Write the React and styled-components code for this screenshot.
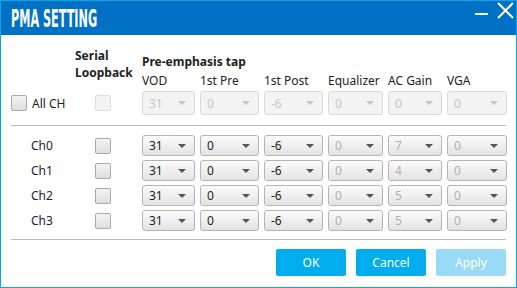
import React from "react";
import styled, { createGlobalStyle, css } from "styled-components";

const Global = createGlobalStyle`
  html, body { margin: 0; padding: 0; background: #ffffff; }
  body { font-family: "Noto Sans", "Open Sans", sans-serif; font-size: 12px; color: #222; }
`;

const COLS = [53, 59, 59, 55, 54, 60];
const gridCols = COLS.map((w) => `${w}px`).join(" ");

const Window = styled.div`
  width: 517px;
  height: 288px;
  box-sizing: border-box;
  border: 1px solid #13a3e3;
  display: flex;
  flex-direction: column;
  background: #fff;
  overflow: hidden;
`;

const TitleBar = styled.div`
  height: 34px;
  background: #0071c5;
  display: flex;
  align-items: center;
  padding-left: 10px;
  position: relative;
  flex-shrink: 0;
`;

const Title = styled.span`
  display: inline-block;
  color: #fff;
  font-family: "DejaVu Sans Condensed", "DejaVu Sans", sans-serif;
  font-weight: bold;
  font-size: 24px;
  line-height: 1;
  transform: scaleX(0.52);
  transform-origin: left center;
  white-space: nowrap;
  margin-top: 1px;
`;

const WinControls = styled.div`
  margin-left: auto;
  display: flex;
  align-items: flex-start;
  align-self: stretch;
  gap: 9px;
  padding-right: 2px;
`;

const Body = styled.div`
  padding: 0 10px 0 10px;
  display: flex;
  flex-direction: column;
`;

const Header = styled.div`
  display: flex;
  height: 54px;
`;

const LeftCol = styled.div`
  width: 64px;
  flex-shrink: 0;
  display: flex;
  align-items: center;
  gap: 5px;
  padding-left: ${(p) => p.$indent || 0}px;
  box-sizing: border-box;
`;

const SerialHead = styled.div`
  width: 67px;
  flex-shrink: 0;
  font-weight: bold;
  line-height: 17px;
  padding-top: 12px;
`;

const PreBlock = styled.div`
  padding-top: 17px;
  line-height: 19px;
`;

const PreTitle = styled.div`
  font-weight: bold;
`;

const ColGrid = styled.div`
  display: grid;
  grid-template-columns: ${gridCols};
  column-gap: 5px;
`;

const ColLabel = styled.div`
  white-space: nowrap;
`;

const Row = styled.div`
  display: flex;
  align-items: center;
  height: ${(p) => p.$h}px;
  margin-top: ${(p) => p.$mt || 0}px;
`;

const SerialCell = styled.div`
  width: 67px;
  flex-shrink: 0;
  display: flex;
  padding-left: 20px;
  box-sizing: border-box;
`;

const Check = styled.div`
  width: 16px;
  height: 16px;
  box-sizing: border-box;
  border-radius: 2px;
  ${(p) =>
    p.$disabled
      ? css`
          border: 1px solid #dcdcdc;
          background: #f3f3f3;
        `
      : css`
          border: 1px solid #a9a9a9;
          background: linear-gradient(#f4f4f4, #dedede);
        `}
`;

const Label = styled.span`
  white-space: nowrap;
`;

const Select = styled.div`
  height: ${(p) => p.$h}px;
  box-sizing: border-box;
  border-radius: 3px;
  display: flex;
  align-items: center;
  padding-left: 6px;
  position: relative;
  font-size: 12px;
  ${(p) =>
    p.$disabled
      ? css`
          border: 1px solid #dadada;
          background: #f3f3f3;
          color: #c6c6c6;
        `
      : css`
          border: 1px solid #b4b4b4;
          background: linear-gradient(#fbfbfb, #e3e3e3);
          color: ${p.$muted ? "#b0b0b0" : "#222"};
        `}
  &::after {
    content: "";
    position: absolute;
    right: 8px;
    top: 50%;
    margin-top: -2px;
    border-left: 4px solid transparent;
    border-right: 4px solid transparent;
    border-top: 4px solid ${(p) => (p.$disabled ? "#c4c4c4" : "#555")};
  }
`;

const Divider = styled.div`
  height: 1px;
  background: #bcbcbc;
  margin-top: ${(p) => p.$mt}px;
`;

const Footer = styled.div`
  display: flex;
  justify-content: flex-end;
  gap: 10px;
  margin-top: 9px;
`;

const Button = styled.button`
  width: 70px;
  height: 27px;
  border: none;
  border-radius: 2px;
  font-family: "Noto Sans", "Open Sans", sans-serif;
  font-size: 12px;
  color: #fff;
  background: ${(p) => (p.$disabled ? "#99dbf6" : "#00adef")};
  padding: 0;
  cursor: pointer;
`;

const allCh = ["31", "0", "-6", "0", "0", "0"];
const chans = [
  ["31", "0", "-6", "0", "7", "0"],
  ["31", "0", "-6", "0", "4", "0"],
  ["31", "0", "-6", "0", "5", "0"],
  ["31", "0", "-6", "0", "5", "0"],
];
const headers = ["VOD", "1st Pre", "1st Post", "Equalizer", "AC Gain", "VGA"];

export default function App() {
  return (
    <>
      <Global />
      <Window>
        <TitleBar>
          <Title>PMA SETTING</Title>
          <WinControls>
            <svg width="13" height="34" viewBox="0 0 13 34">
              <rect x="0" y="12" width="13" height="2" fill="#fff" />
            </svg>
            <svg width="17" height="20" viewBox="0 0 17 20">
              <path d="M1 2 L16 17 M16 2 L1 17" stroke="#fff" strokeWidth="2" fill="none" />
            </svg>
          </WinControls>
        </TitleBar>
        <Body>
          <Header>
            <LeftCol />
            <SerialHead>
              Serial
              <br />
              Loopback
            </SerialHead>
            <PreBlock>
              <PreTitle>Pre-emphasis tap</PreTitle>
              <ColGrid>
                {headers.map((h) => (
                  <ColLabel key={h}>{h}</ColLabel>
                ))}
              </ColGrid>
            </PreBlock>
          </Header>
          <Row $h={24} $mt={2}>
            <LeftCol>
              <Check />
              <Label>All CH</Label>
            </LeftCol>
            <SerialCell>
              <Check $disabled />
            </SerialCell>
            <ColGrid>
              {allCh.map((v, i) => (
                <Select key={i} $h={24} $disabled>
                  {v}
                </Select>
              ))}
            </ColGrid>
          </Row>
          <Divider $mt={10} />
          {chans.map((vals, r) => (
            <Row key={r} $h={21} $mt={r === 0 ? 9 : 4}>
              <LeftCol $indent={20}>
                <Label>Ch{r}</Label>
              </LeftCol>
              <SerialCell>
                <Check />
              </SerialCell>
              <ColGrid>
                {vals.map((v, i) => (
                  <Select key={i} $h={21} $muted={i >= 3}>
                    {v}
                  </Select>
                ))}
              </ColGrid>
            </Row>
          ))}
          <Divider $mt={8} />
          <Footer>
            <Button>OK</Button>
            <Button>Cancel</Button>
            <Button $disabled>Apply</Button>
          </Footer>
        </Body>
      </Window>
    </>
  );
}
